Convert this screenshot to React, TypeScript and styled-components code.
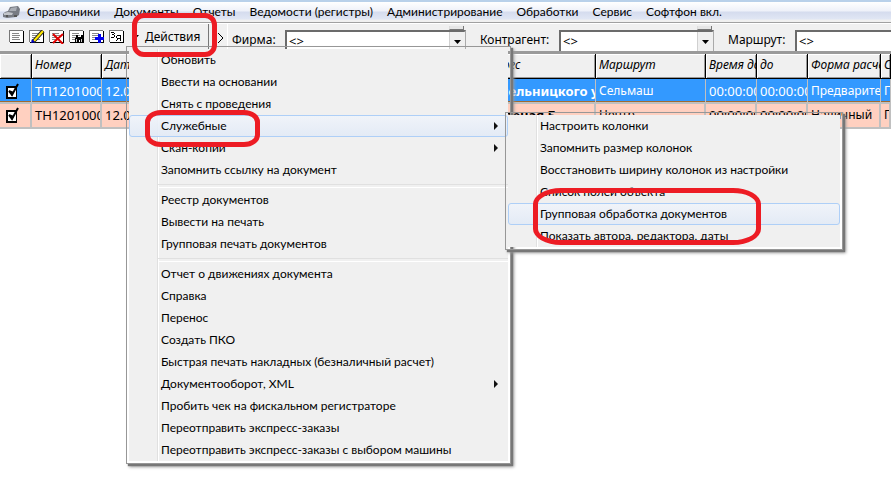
import React from "react";
import styled, { createGlobalStyle, css } from "styled-components";

const uiFont = 'Lato, "Open Sans", sans-serif';
const gridFont = '"Noto Sans", "DejaVu Sans", sans-serif';

const GlobalStyle = createGlobalStyle`
  * { box-sizing: border-box; }
  html { height: 100%; }
  body {
    margin: 0;
    min-height: 100%;
    background: #fff;
    color: #000;
    font: 12px/16px ${uiFont};
    overflow: hidden;
  }
  button, select, input { font: inherit; color: inherit; margin: 0; }
`;

const Page = styled.div`
  position: relative;
  min-height: 100vh;
`;

const MenuBar = styled.nav`
  display: flex;
  align-items: center;
  height: 23px;
  padding-left: 3px;
  border-top: 2px solid #b9d1ea;
  border-bottom: 1px solid #a0a0a0;
  background: linear-gradient(#fff 0, #eef1f9 45%, #d5dcee 50%, #e0e6f4 85%, #f0f0f0 90%);
`;

const BarButton = styled.button`
  border: 0;
  padding: 0 7px;
  background: none;
  white-space: nowrap;
  line-height: 18px;
`;

const ToolBar = styled.div`
  display: flex;
  align-items: flex-start;
  height: 31px;
  border-top: 1px solid #fff;
  border-bottom: 3px solid #9a9a9a;
  background: #f0f0f0;
  overflow: hidden;
`;

const IconGroup = styled.div`
  display: flex;
  flex: none;
  gap: 4px;
  padding: 6px 0 0 9px;
`;

const IconButton = styled.button`
  display: flex;
  width: 16px;
  height: 14px;
  border: 0;
  padding: 0;
  background: none;
`;

const ActionsButton = styled.button`
  display: flex;
  flex: none;
  align-items: center;
  gap: 6px;
  width: 82px;
  height: 28px;
  margin-left: 2px;
  padding: 0 0 2px 5px;
  border: 0;
  border-right: 1px solid #777;
  background: #f0f0f0;
  font: 12px/16px ${gridFont};
`;

const Overflow = styled.button`
  display: flex;
  flex: none;
  align-items: center;
  width: 19px;
  height: 28px;
  padding: 0 0 0 8px;
  border: 0;
  border-right: 1px solid #fff;
  background: none;
`;

const Fields = styled.div`
  display: flex;
  flex: 1;
  min-width: 0;
  overflow: hidden;
  padding-left: 4px;
`;

const Field = styled.label<{ $width?: number }>`
  display: flex;
  align-items: flex-start;
  flex: ${(p) => (p.$width ? `0 0 ${p.$width}px` : "1 0 260px")};
  margin-right: 14px;
  font: 12px/16px ${gridFont};
`;

const FieldName = styled.span<{ $width: number }>`
  flex: 0 0 ${(p) => p.$width}px;
  padding-top: 8px;
  white-space: nowrap;
`;

const Combo = styled.span`
  display: grid;
  flex: 1;
  grid-template-rows: 6px 24px;
  grid-template-columns: 1fr 16px;
`;

const Spin = styled.span`
  grid-area: 1 / 2;
  align-self: end;
  height: 4px;
  margin: 0 2px 0 -1px;
  border: 1px solid #777;
  border-top: 0;
  border-left-color: #ddd;
  background: #e6e6e6;
`;

const Select = styled.select`
  grid-area: 2 / 1 / 3 / 3;
  appearance: none;
  width: 100%;
  height: 24px;
  padding: 0 20px 2px 2px;
  border: 2px solid #6b6b6b;
  border-right-color: #aaa;
  border-radius: 0;
  background: #fff;
  font: 13px/16px ${gridFont};
`;

const DropMark = styled.span`
  grid-area: 2 / 2;
  z-index: 1;
  display: flex;
  align-items: center;
  justify-content: center;
  height: 20px;
  margin: 2px 1px 0 -1px;
  border-left: 1px solid #d0d0d0;
  background: #f0f0f0;
  pointer-events: none;
`;

const Grid = styled.table`
  width: 100%;
  table-layout: fixed;
  border-collapse: separate;
  border-spacing: 0;
  font: 12px/16px ${gridFont};
`;

const HeadCell = styled.th`
  height: 25px;
  padding: 0 0 2px 3px;
  overflow: hidden;
  border-right: 1px solid #000;
  border-bottom: 1px solid #000;
  box-shadow: inset 1px 1px #fff, inset -1px -1px #999;
  background: #f0f0f0;
  font-weight: 400;
  font-style: italic;
  text-align: left;
  white-space: nowrap;
`;

const Row = styled.tr<{ $selected?: boolean }>`
  ${(p) =>
    p.$selected
      ? css`
          background: #3399ff;
          color: #fff;
        `
      : css`
          background: #ffd0c0;
        `}
`;

const Cell = styled.td<{ $strong?: boolean; $large?: boolean }>`
  height: 25px;
  padding: 0 0 2px 3px;
  overflow: hidden;
  border-right: 2px solid #c0c0c0;
  border-bottom: 2px solid #c0c0c0;
  font-size: ${(p) => (p.$large || p.$strong ? 13 : 12)}px;
  font-weight: ${(p) => (p.$strong ? 700 : 400)};
  white-space: nowrap;
  ${Row}:first-child & {
    padding-bottom: 0;
    border-right-width: 1px;
    box-shadow: inset 0 -1px #a06a30;
  }
`;

const CheckCell = styled(Cell)`
  padding-left: 6px;
`;

const CheckLabel = styled.label`
  display: grid;
  width: 14px;
  height: 17px;
  > * { grid-area: 1 / 1; }
`;

const CheckBox = styled.input`
  appearance: none;
  align-self: end;
  width: 11px;
  height: 13px;
  border: 2px solid #000;
  border-right-width: 1px;
  background: #fff;
`;

const Menu = styled.ul`
  position: absolute;
  z-index: 5;
  margin: 0;
  padding: 2px;
  list-style: none;
  border: 1px solid #979797;
  background: linear-gradient(90deg, #f0f0f0 28px, #e0e0e0 28px, #e0e0e0 29px, #fff 29px, #fff 30px, #f0f0f0 30px)
    content-box #f4f4f4;
  box-shadow: 2px 2px 1px #777, 3px 3px 3px #999;
`;

const MainMenu = styled(Menu)`
  top: 46px;
  left: 126px;
  width: 385px;
`;

const SubMenu = styled(Menu)`
  top: -3px;
  left: 376px;
  width: 338px;
`;

const MenuRow = styled.li`
  position: relative;
`;

const MenuItem = styled.button<{ $hot?: boolean }>`
  display: flex;
  align-items: center;
  justify-content: space-between;
  width: 100%;
  height: 22px;
  padding: 0 9px 0 31px;
  border: 1px solid ${(p) => (p.$hot ? "#aecff7" : "transparent")};
  border-radius: 3px;
  background: ${(p) => (p.$hot ? "linear-gradient(rgba(240,244,250,.9), rgba(226,234,246,.9))" : "none")};
  text-align: left;
  white-space: nowrap;
`;

const Divider = styled.li`
  height: 8px;
  margin-left: 29px;
  padding-top: 3px;
  &::before {
    content: "";
    display: block;
    height: 2px;
    border-top: 1px solid #e0e0e0;
    border-bottom: 1px solid #fff;
  }
`;

const Mark = styled.div<{ $x: number; $y: number; $w: number; $h: number; $r: string }>`
  position: absolute;
  z-index: 10;
  left: ${(p) => p.$x}px;
  top: ${(p) => p.$y}px;
  width: ${(p) => p.$w}px;
  height: ${(p) => p.$h}px;
  border: 5px solid #ed1c24;
  border-radius: ${(p) => p.$r};
  pointer-events: none;
`;

type IconName = "new" | "edit" | "delete" | "find" | "copy" | "sort";

function DocIcon({ name }: { name: IconName }) {
  return (
    <svg width="16" height="14" viewBox="0 0 16 14" shapeRendering="crispEdges" aria-hidden="true">
      <path d="M1 1h14v12H1z" fill="#000" />
      <path d="M0 0h14v12H0z" fill="#777" />
      <path d="M1 1h13v11H1z" fill="#fff" />
      {name !== "sort" && <path d="M3 3.5h7M3 5.5h8M3 7.5h7M3 9.5h8" stroke="#888" />}
      {name === "edit" && (
        <g shapeRendering="auto">
          <path d="M4 12L14 1" stroke="#222" strokeWidth="4" />
          <path d="M5 11L14 1" stroke="#ffe800" strokeWidth="2" />
          <path d="M2 13l1-4 3 3z" fill="#0000c0" />
        </g>
      )}
      {name === "delete" && (
        <path d="M4 4l10 10M14 4L4 13" stroke="#e00000" strokeWidth="2" shapeRendering="auto" />
      )}
      {name === "find" && (
        <g>
          <path d="M7 5h2v2h3V5h2v3h1v5h-4v-3h-1v3H6V8h1z" fill="#000" />
          <path d="M7.500 9v3M12.500 9v3" stroke="#ccc" />
        </g>
      )}
      {name === "copy" && <path d="M9 4h3v3h3v3h-3v3H9v-3H6V7h3z" fill="#0000ee" />}
      {name === "sort" && (
        <g fill="none" stroke="#000">
          <path d="M2 2.5h3M5.500 3v1M3 4.500h2M5.500 5v2M2 7.500h3" />
          <path d="M8 5.500h4M7.500 6v2M8 8.500h4M11.500 5v6M8.500 9v1M7.500 10v1" />
        </g>
      )}
    </svg>
  );
}

function AppIcon() {
  return (
    <svg width="17" height="13" viewBox="0 0 17 13" aria-hidden="true">
      <path d="M0 8l2-2 3-1 2-4 8-1 2 3-1 6-3 2-9 1-4-1z" fill="#777b84" />
      <path d="M6 5l2-3 6-1-1 4z" fill="#a9adb5" />
      <path d="M1 7l4-1 5 1-1 2-8 0z" fill="#c2c5cb" />
      <path d="M3 10h2M11 10h3" stroke="#555" strokeWidth="2" />
    </svg>
  );
}

const Down = () => (
  <svg width="7" height="4" viewBox="0 0 7 4" aria-hidden="true">
    <path d="M0 0h7L3.500 4z" fill="#000" />
  </svg>
);

const Right = () => (
  <svg width="4" height="8" viewBox="0 0 4 8" aria-hidden="true">
    <path d="M0 0l4 4-4 4z" fill="#111" />
  </svg>
);

const barItems = [
  "Справочники",
  "Документы",
  "Отчеты",
  "Ведомости (регистры)",
  "Администрирование",
  "Обработки",
  "Сервис",
  "Софтфон вкл.",
];

const tools: [IconName, string][] = [
  ["new", "Новый"],
  ["edit", "Изменить"],
  ["delete", "Удалить"],
  ["find", "Найти"],
  ["copy", "Скопировать"],
  ["sort", "Сортировка"],
];

const fields: [string, number, number?][] = [
  ["Фирма:", 53, 234],
  ["Контрагент:", 79, 234],
  ["Маршрут:", 67],
];

const menuItems: (string | null)[] = [
  "Обновить",
  "Ввести на основании",
  "Снять с проведения",
  "Служебные",
  "Скан-копии",
  "Запомнить ссылку на документ",
  null,
  "Реестр документов",
  "Вывести на печать",
  "Групповая печать документов",
  null,
  "Отчет о движениях документа",
  "Справка",
  "Перенос",
  "Создать ПКО",
  "Быстрая печать накладных (безналичный расчет)",
  "Документооборот, XML",
  "Пробить чек на фискальном регистраторе",
  "Переотправить экспресс-заказы",
  "Переотправить экспресс-заказы с выбором машины",
];

const withSubmenu = ["Служебные", "Скан-копии", "Документооборот, XML"];

const serviceItems = [
  "Настроить колонки",
  "Запомнить размер колонок",
  "Восстановить ширину колонок из настройки",
  "Список полей объекта",
  "Групповая обработка документов",
  "Показать автора, редактора, даты",
];

const columns: [string, number?][] = [
  ["", 32],
  ["Номер", 70],
  ["Дата", 384],
  ["Адрес", 110],
  ["Маршрут", 110],
  ["Время до", 51],
  ["до", 51],
  ["Форма расчета", 73],
  ["С"],
];

const largeColumns = [0, 1, 4, 5];

const rows = [
  ["ТП12010001", "12.01", "Хмельницкого ул.", "Сельмаш", "00:00:00", "00:00:00", "Предварительно", "П"],
  ["ТН12010001", "12.01", "Зеленая Б.", "Центр", "00:00:00", "00:00:00", "Наличный", "П"],
];

export default function App() {
  return (
    <Page>
      <GlobalStyle />
      <MenuBar>
        <AppIcon />
        {barItems.map((t) => (
          <BarButton key={t}>{t}</BarButton>
        ))}
      </MenuBar>
      <ToolBar>
        <IconGroup>
          {tools.map(([name, label]) => (
            <IconButton key={name} aria-label={label}>
              <DocIcon name={name} />
            </IconButton>
          ))}
        </IconGroup>
        <ActionsButton>
          <Down />
          Действия
        </ActionsButton>
        <Overflow aria-label="Ещё">
          <svg width="7" height="12" viewBox="0 0 7 12" aria-hidden="true">
            <path d="M1 1l5 5-5 5" fill="none" stroke="#000" />
          </svg>
        </Overflow>
        <Fields>
          {fields.map(([label, nameWidth, width]) => (
            <Field key={label} $width={width}>
              <FieldName $width={nameWidth}>{label}</FieldName>
              <Combo>
                <Spin />
                <Select>
                  <option>&lt;&gt;</option>
                </Select>
                <DropMark>
                  <Down />
                </DropMark>
              </Combo>
            </Field>
          ))}
        </Fields>
      </ToolBar>
      <Grid>
        <colgroup>
          {columns.map(([, width], i) => (
            <col key={i} width={width} />
          ))}
        </colgroup>
        <thead>
          <tr>
            {columns.map(([name], i) => (
              <HeadCell key={i}>{name}</HeadCell>
            ))}
          </tr>
        </thead>
        <tbody>
          {rows.map((row, r) => (
            <Row key={row[0]} $selected={r === 0}>
              <CheckCell>
                <CheckLabel>
                  <CheckBox type="checkbox" defaultChecked aria-label={row[0]} />
                  <svg width="14" height="17" viewBox="0 0 14 17" aria-hidden="true">
                    <path d="M3 9l3 4L12 2" fill="none" stroke="#000" strokeWidth="2" />
                    <path d="M3 8l3 6 2-4z" fill="#000" />
                  </svg>
                </CheckLabel>
              </CheckCell>
              {row.map((value, i) => (
                <Cell key={i} $strong={i === 2} $large={largeColumns.includes(i)}>
                  {value}
                </Cell>
              ))}
            </Row>
          ))}
        </tbody>
      </Grid>
      <MainMenu>
        {menuItems.map((text, i) =>
          text === null ? (
            <Divider key={i} />
          ) : (
            <MenuRow key={i}>
              <MenuItem $hot={text === "Служебные"}>
                {text}
                {withSubmenu.includes(text) && <Right />}
              </MenuItem>
              {text === "Служебные" && (
                <SubMenu>
                  {serviceItems.map((item) => (
                    <MenuRow key={item}>
                      <MenuItem $hot={item === "Групповая обработка документов"}>{item}</MenuItem>
                    </MenuRow>
                  ))}
                </SubMenu>
              )}
            </MenuRow>
          ),
        )}
      </MainMenu>
      <Mark $x={132} $y={13} $w={85} $h={44} $r="12px" />
      <Mark $x={145} $y={110} $w={115} $h={37} $r="16px / 12px" />
      <Mark $x={533} $y={188} $w={228} $h={57} $r="28px / 16px" />
    </Page>
  );
}
